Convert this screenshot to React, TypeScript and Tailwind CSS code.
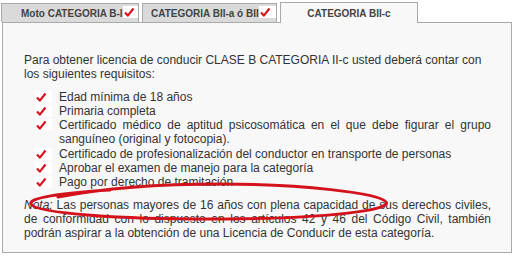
import React from 'react';

const Check = ({ className = '' }: { className?: string }) => (
  <svg width="17" height="12" viewBox="0 0 17 12" className={className}>
    <rect x="0" y="0" width="17" height="12" fill="#ffffff" />
    <path d="M2 6.5 L4.8 9.6 L10.5 2.5" fill="none" stroke="#d9141e" strokeWidth="2.2" strokeLinejoin="round" />
  </svg>
);

const requisitos = [
  'Edad mínima de 18 años',
  'Primaria completa',
  'Certificado médico de aptitud psicosomática en el que debe figurar el grupo sanguíneo (original y fotocopia).',
  'Certificado de profesionalización del conductor en transporte de personas',
  'Aprobar el examen de manejo para la categoría',
  'Pago por derecho de tramitación',
];

export default function App() {
  return (
    <div className="relative w-[514px] h-[258px] bg-white text-[12px] text-[#333] [font-family:'Liberation_Sans',Arial,sans-serif]">
      <div className="flex items-end h-[22px] pl-px gap-[3px] relative z-10">
        <div className="w-[138px] h-[19px] border border-b-0 border-[#a9a9a9] bg-[#dadada] flex items-center pl-[19px] text-[10px] font-bold text-[#444] whitespace-nowrap overflow-hidden">
          <span className="shrink-0">Moto CATEGORIA B-I</span>
          <Check className="-mt-[3px] shrink-0" />
        </div>
        <div className="w-[135px] h-[19px] border border-b-0 border-[#a9a9a9] bg-[#dadada] flex items-center pl-[8px] text-[10px] font-bold text-[#444] whitespace-nowrap overflow-hidden">
          <span className="shrink-0">CATEGORIA BII-a ó BII</span>
          <Check className="-mt-[3px] shrink-0" />
        </div>
        <div className="w-[138px] h-[21px] -mb-px border border-b-0 border-[#a9a9a9] bg-[#f8f8f8] flex items-center justify-center text-[10px] font-bold text-[#444] whitespace-nowrap">
          CATEGORIA BII-c
        </div>
      </div>
      <div className="ml-[2px] w-[510px] h-[231px] border border-[#a9a9a9] bg-[#f8f8f8] pl-[21px] pr-[20px] pt-[30px] leading-[14.3px]">
        <p>
          Para obtener licencia de conducir CLASE B CATEGORIA II-c usted deberá contar con los siguientes requisitos:
        </p>
        <ul className="mt-[8px] flex flex-col">
          {requisitos.map((r) => (
            <li key={r} className="flex items-start">
              <Check className="ml-[11px] mr-[7px] mt-px shrink-0" />
              <span className="text-justify">{r}</span>
            </li>
          ))}
        </ul>
        <p className="mt-[8px] text-justify">
          <em>Nota:</em> Las personas mayores de 16 años con plena capacidad de sus derechos civiles, de conformidad con lo dispuesto en los artículos 42 y 46 del Código Civil, también podrán aspirar a la obtención de una Licencia de Conducir de esta categoría.
        </p>
      </div>
      <svg className="absolute left-0 top-0 pointer-events-none" width="514" height="258" viewBox="0 0 514 258">
        <path
          d="M110 190 C60 193, 28 198, 31 204 C35 213, 120 220, 230 219 C330 218, 392 210, 386 202 C380 193, 300 184, 220 184 C160 184, 100 189, 58 197"
          fill="none"
          stroke="#d3121c"
          strokeWidth="3"
          strokeLinecap="round"
        />
      </svg>
    </div>
  );
}
